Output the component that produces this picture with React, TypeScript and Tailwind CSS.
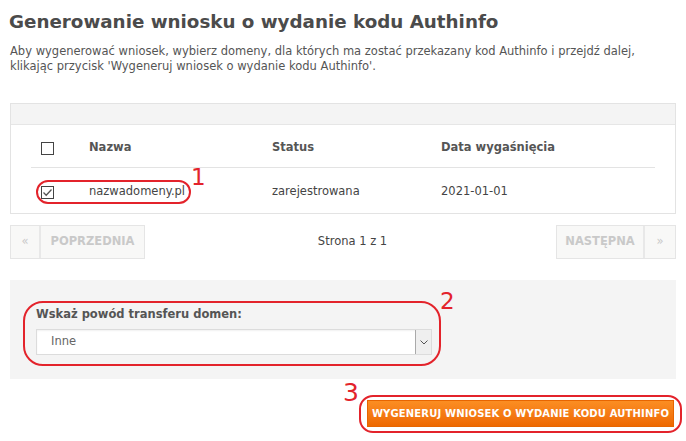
import React from "react";

function Checkbox({ checked }: { checked?: boolean }) {
  return (
    <div className="w-[13px] h-[13px] border border-[#444] bg-white flex items-center justify-center">
      {checked && (
        <svg width="11" height="11" viewBox="0 0 11 11">
          <path d="M1.5 5.5 L4.2 8.2 L9.5 2.5" fill="none" stroke="#555" strokeWidth="1.3" />
        </svg>
      )}
    </div>
  );
}

export default function App() {
  return (
    <div className="relative w-[686px] h-[441px] bg-white font-['DejaVu_Sans',sans-serif] overflow-hidden">
      <div className="px-[10px]">
        <h1 className="pt-[11px] text-[18.3px] leading-[22px] font-bold text-[#4b4b4b] -ml-[1px]">
          Generowanie wniosku o wydanie kodu Authinfo
        </h1>
        <p className="mt-[11px] text-[11.5px] leading-[15px] text-[#555]">
          Aby wygenerować wniosek, wybierz domeny, dla których ma zostać przekazany kod Authinfo i przejdź dalej,
          <br />
          klikając przycisk 'Wygeneruj wniosek o wydanie kodu Authinfo'.
        </p>

        <div className="mt-[29px] border border-[#e3e3e3]">
          <div className="h-[21px] bg-[#f4f4f4] border-b border-[#e6e6e6]" />
          <div className="mx-[20px]">
            <div className="grid grid-cols-[58px_183px_169px_1fr] items-center h-[43px] pt-[4px] border-b border-[#e3e3e3] text-[11.5px] font-bold text-[#555]">
              <div className="pl-[10px]"><Checkbox /></div>
              <div>Nazwa</div>
              <div>Status</div>
              <div>Data wygaśnięcia</div>
            </div>
            <div className="grid grid-cols-[58px_183px_169px_1fr] items-center h-[45px] pt-[2px] text-[11.5px] text-[#444]">
              <div className="pl-[10px] pt-[2px]"><Checkbox checked /></div>
              <div>nazwadomeny.pl</div>
              <div>zarejestrowana</div>
              <div>2021-01-01</div>
            </div>
          </div>
        </div>

        <div className="mt-[11px] flex items-stretch h-[34px]">
          <div className="flex border border-[#e5e5e5] bg-[#f8f8f7] text-[11.5px] font-bold text-[#c9c9c9]">
            <div className="w-[30px] flex items-center justify-center border-r-2 border-[#e8e8e8] font-normal">«</div>
            <div className="w-[103px] flex items-center justify-center">POPRZEDNIA</div>
          </div>
          <div className="flex-1 flex items-center justify-center text-[11.5px] text-[#444] pl-[4px]">Strona 1 z 1</div>
          <div className="flex border border-[#e5e5e5] bg-[#f8f8f7] text-[11.5px] font-bold text-[#c9c9c9]">
            <div className="w-[88px] flex items-center justify-center border-r-2 border-[#e8e8e8]">NASTĘPNA</div>
            <div className="w-[30px] flex items-center justify-center font-normal">»</div>
          </div>
        </div>

        <div className="mt-[21px] h-[99px] bg-[#f4f4f4] pl-[26px] pt-[27px]">
          <div className="text-[11.5px] font-bold text-[#555] leading-[14px]">Wskaż powód transferu domen:</div>
          <div className="mt-[8px] w-[396px] h-[26px] bg-white border border-[#dcdcdc] shadow-[inset_0_1px_2px_rgba(0,0,0,0.06)] flex items-center justify-between">
            <span className="pl-[14px] text-[11.5px] text-[#666]">Inne</span>
            <div className="w-[16px] h-[24px] bg-[#efefef] border-l border-[#aaa] flex items-center justify-center">
              <svg width="8" height="5" viewBox="0 0 8 5">
                <path d="M0.5 0.5 L4 4 L7.5 0.5" fill="none" stroke="#555" strokeWidth="1" />
              </svg>
            </div>
          </div>
        </div>

        <div className="mt-[21px] flex justify-end pr-[2px]">
          <button className="w-[307px] h-[27px] border border-[#e76500] bg-gradient-to-b from-[#fb8e22] to-[#ee6800] text-white text-[10px] font-bold tracking-[0.15px] flex items-center justify-center">
            WYGENERUJ WNIOSEK O WYDANIE KODU AUTHINFO
          </button>
        </div>
      </div>

      {/* Annotations */}
      <div className="absolute left-[36px] top-[180px] w-[155px] h-[24px] border-2 border-[#e3232b] rounded-[12px]" />
      <div className="absolute left-[191px] top-[164px] text-[23px] leading-[26px] text-[#e3232b]">1</div>

      <div className="absolute left-[23px] top-[301px] w-[418px] h-[65px] border-2 border-[#e3232b] rounded-[20px]" />
      <div className="absolute left-[440px] top-[288px] text-[23px] leading-[26px] text-[#e3232b]">2</div>

      <div className="absolute left-[359px] top-[395px] w-[323px] h-[38px] border-2 border-[#e3232b] rounded-[14px]" />
      <div className="absolute left-[343px] top-[379px] text-[25px] leading-[28px] text-[#e3232b]">3</div>
    </div>
  );
}
